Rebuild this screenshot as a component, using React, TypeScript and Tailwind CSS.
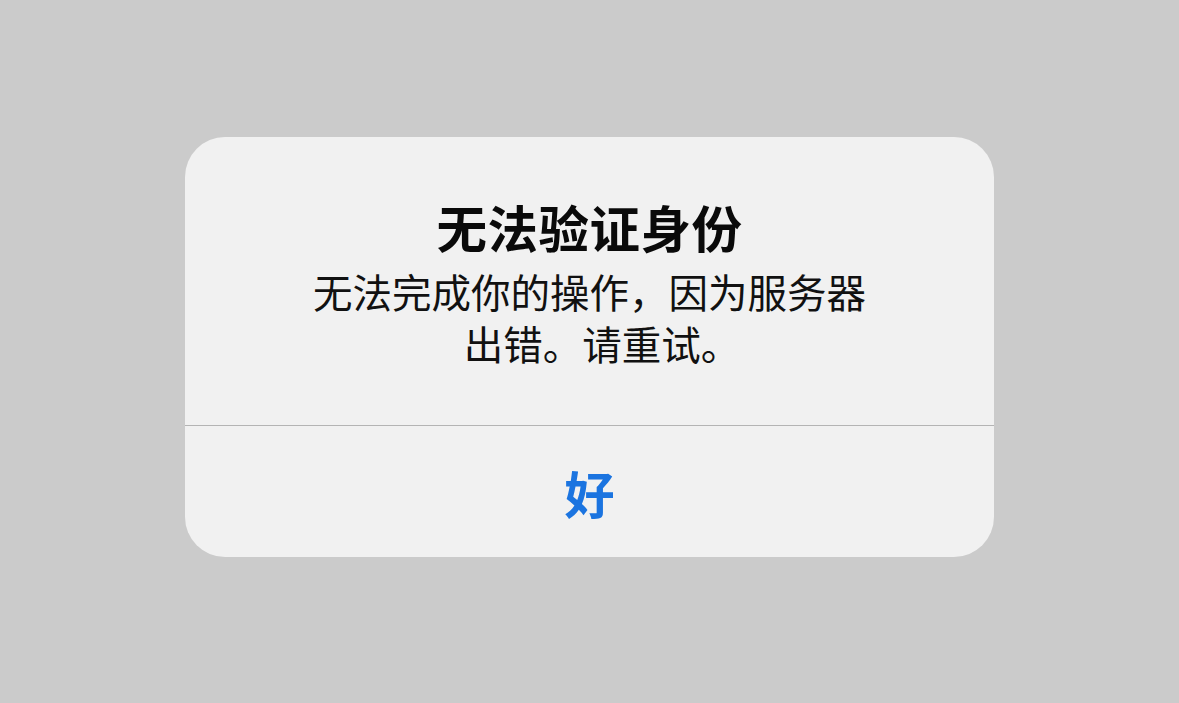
import React from "react";

export default function App() {
  return (
    <div
      className="w-[1179px] h-[703px] bg-[#cbcbcb] flex justify-center pt-[137px]"
      style={{ fontFamily: '"Noto Sans CJK SC", "Noto Sans", sans-serif' }}
    >
      <div className="w-[809px] h-[420px] bg-[#f1f1f1] rounded-[40px] flex flex-col overflow-hidden">
        <div className="flex flex-col items-center pt-[59px] pb-[56px] border-b border-[#b4b4b4]">
          <div className="text-[50.5px] leading-[60px] font-bold text-[#0a0a0a] tracking-[0.5px]">
            无法验证身份
          </div>
          <div className="mt-[9px] text-[39.5px] leading-[52px] text-[#111111] text-center">
            <div>无法完成你的操作，因为服务器</div>
            <div className="pl-[25px]">出错。请重试。</div>
          </div>
        </div>
        <div className="flex-1 flex items-center justify-center">
          <span className="text-[50px] leading-[60px] font-semibold text-[#1b74e0]">好</span>
        </div>
      </div>
    </div>
  );
}
